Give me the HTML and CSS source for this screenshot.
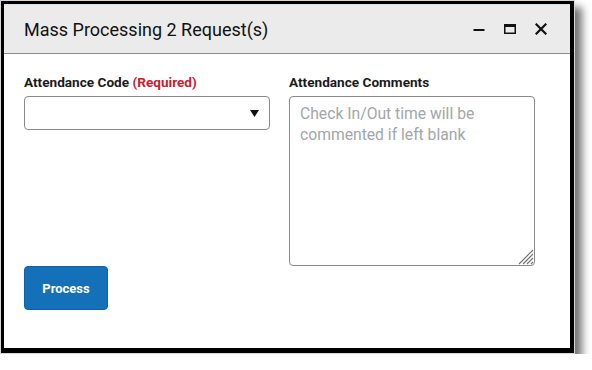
FILE: index.html
```html
<!DOCTYPE html>
<html>
<head>
<meta charset="utf-8">
<link rel="stylesheet" href="styles.css">
</head>
<body>
<div class="window">
  <div class="header">
    <div class="title">Mass Processing 2 Request(s)</div>
    <div class="controls">
      <svg class="ctl" width="12" height="12" viewBox="0 0 12 12"><rect x="0.5" y="6" width="11" height="2" fill="#111"/></svg>
      <svg class="ctl" width="12" height="12" viewBox="0 0 12 12"><rect x="0.75" y="1.75" width="10.5" height="8.5" fill="none" stroke="#111" stroke-width="1.5"/><rect x="0.5" y="1" width="11" height="3" fill="#111"/></svg>
      <svg class="ctl" width="12" height="12" viewBox="0 0 12 12"><path d="M1.5 1.5 L10.5 10.5 M10.5 1.5 L1.5 10.5" stroke="#111" stroke-width="2.2" stroke-linecap="square"/></svg>
    </div>
  </div>
  <div class="body">
    <div class="fields">
      <div class="field">
        <div class="label">Attendance Code <span class="req">(Required)</span></div>
        <div class="select">
          <svg width="9" height="7" viewBox="0 0 9 7"><path d="M0 0 H9 L4.5 7 Z" fill="#111"/></svg>
        </div>
      </div>
      <div class="field">
        <div class="label">Attendance Comments</div>
        <div class="ta-wrap">
          <textarea class="comments" placeholder="Check In/Out time will be commented if left blank"></textarea>
          <svg class="grip" width="18" height="18" viewBox="0 0 18 18"><path d="M3 17 L17 3 M7 17 L17 7 M11 17 L17 11 M15 17 L17 15" stroke="#6f6f6f" stroke-width="1.1"/></svg>
        </div>
      </div>
    </div>
    <button class="process">Process</button>
  </div>
</div>
</body>
</html>
```
FILE: styles.css
```css
html, body {
  margin: 0;
  padding: 0;
  background: #fff;
}
body {
  font-family: Roboto, "Liberation Sans", Arial, sans-serif;
}
.window {
  box-sizing: content-box;
  width: 566px;
  height: 344px;
  border-style: solid;
  border-color: #000;
  border-width: 4px 5px 6px 4px;
  box-shadow: 7px 7px 8px rgba(0, 0, 0, 0.55);
  display: flex;
  flex-direction: column;
  background: #fff;
  outline: 1px solid #d6d6d6;
  outline-offset: -1px;
}
.header {
  box-sizing: border-box;
  height: 50px;
  border-top: 1px solid #cfe3f5;
  border-bottom: 1px solid #8c8c8c;
  background: #ebebeb;
  display: flex;
  align-items: center;
  justify-content: space-between;
  padding: 0 23px 0 20px;
}
.title {
  font-size: 18px;
  color: #111;
  padding-top: 1px;
}
.controls {
  display: flex;
  gap: 19px;
  align-items: center;
}
.ctl {
  display: block;
}
.body {
  padding: 20px 20px 0 20px;
  flex: 1;
}
.fields {
  display: grid;
  grid-template-columns: 246px 246px;
  column-gap: 19px;
}
.field {
  display: flex;
  flex-direction: column;
}
.label {
  font-size: 13.6px;
  font-weight: 700;
  line-height: 16px;
  color: #1a1a1a;
  margin-bottom: 6px;
}
.req {
  color: #c8202f;
}
.select {
  box-sizing: border-box;
  height: 34px;
  border: 1px solid #8a8a8a;
  border-radius: 4px;
  display: flex;
  align-items: center;
  justify-content: flex-end;
  padding-right: 10px;
}
.ta-wrap {
  position: relative;
  width: 246px;
  height: 170px;
}
.comments {
  box-sizing: border-box;
  display: block;
  width: 246px;
  height: 170px;
  margin: 0;
  border: 1px solid #8a8a8a;
  border-radius: 4px;
  padding: 6px 10px;
  font-family: Roboto, "Liberation Sans", Arial, sans-serif;
  font-size: 15.7px;
  line-height: 21px;
  color: #222;
  resize: none;
  outline: none;
}
.comments::placeholder {
  color: #a2a6aa;
}
.grip {
  position: absolute;
  right: 1px;
  bottom: 1px;
}
.process {
  margin-top: 0;
  width: 84px;
  height: 44px;
  border: 1px solid #0f62a6;
  border-radius: 4px;
  background: #1470b8;
  color: #fff;
  font-family: Roboto, "Liberation Sans", Arial, sans-serif;
  font-size: 13px;
  font-weight: 700;
  padding: 0;
  display: block;
}
```
